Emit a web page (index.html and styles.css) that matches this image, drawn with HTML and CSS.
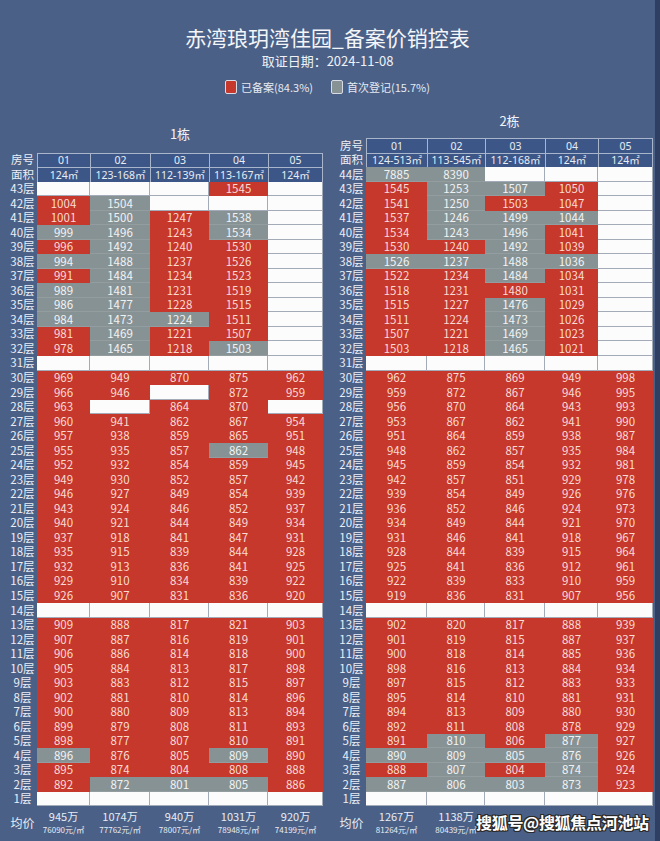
FILE: index.html
```html
<!DOCTYPE html>
<html lang="zh-CN">
<head>
<meta charset="utf-8">
<title>赤湾琅玥湾佳园_备案价销控表</title>
<link rel="stylesheet" href="styles.css">
</head>
<body>
<div class="page">
  <header class="head">
    <h1 class="title">赤湾琅玥湾佳园_备案价销控表</h1>
    <p class="date">取证日期：2024-11-08</p>
    <div class="legend">
      <span class="key"><i class="sw sw-r"></i>已备案(84.3%)</span>
      <span class="key"><i class="sw sw-g"></i>首次登记(15.7%)</span>
    </div>
  </header>

  <main class="blds">
    <section class="bld b1">
      <h2 class="bname">1栋</h2>
      <div class="grid c1">
        <span class="l">房号</span><span class="h">01</span><span class="h">02</span><span class="h">03</span><span class="h">04</span><span class="h hl">05</span>
        <span class="l">面积</span><span class="h">124㎡</span><span class="h">123-168㎡</span><span class="h">112-139㎡</span><span class="h">113-167㎡</span><span class="h hl">124㎡</span>
        <span class="l">43层</span><span class="w"></span><span class="w"></span><span class="w"></span><span class="r">1545</span><span class="w"></span>
        <span class="l">42层</span><span class="r">1004</span><span class="g">1504</span><span class="w"></span><span class="w"></span><span class="w"></span>
        <span class="l">41层</span><span class="r">1001</span><span class="g">1500</span><span class="r">1247</span><span class="g">1538</span><span class="w"></span>
        <span class="l">40层</span><span class="g">999</span><span class="g">1496</span><span class="r">1243</span><span class="g">1534</span><span class="w"></span>
        <span class="l">39层</span><span class="r">996</span><span class="g">1492</span><span class="r">1240</span><span class="r">1530</span><span class="w"></span>
        <span class="l">38层</span><span class="g">994</span><span class="g">1488</span><span class="r">1237</span><span class="r">1526</span><span class="w"></span>
        <span class="l">37层</span><span class="r">991</span><span class="g">1484</span><span class="r">1234</span><span class="r">1523</span><span class="w"></span>
        <span class="l">36层</span><span class="g">989</span><span class="g">1481</span><span class="r">1231</span><span class="r">1519</span><span class="w"></span>
        <span class="l">35层</span><span class="g">986</span><span class="g">1477</span><span class="r">1228</span><span class="r">1515</span><span class="w"></span>
        <span class="l">34层</span><span class="g">984</span><span class="g">1473</span><span class="g">1224</span><span class="r">1511</span><span class="w"></span>
        <span class="l">33层</span><span class="r">981</span><span class="g">1469</span><span class="r">1221</span><span class="r">1507</span><span class="w"></span>
        <span class="l">32层</span><span class="r">978</span><span class="g">1465</span><span class="r">1218</span><span class="g">1503</span><span class="w"></span>
        <span class="l">31层</span><span class="w"></span><span class="w"></span><span class="w"></span><span class="w"></span><span class="w"></span>
        <span class="l">30层</span><span class="r">969</span><span class="r">949</span><span class="r">870</span><span class="r">875</span><span class="r">962</span>
        <span class="l">29层</span><span class="r">966</span><span class="r">946</span><span class="w"></span><span class="r">872</span><span class="r">959</span>
        <span class="l">28层</span><span class="r">963</span><span class="w"></span><span class="r">864</span><span class="r">870</span><span class="w"></span>
        <span class="l">27层</span><span class="r">960</span><span class="r">941</span><span class="r">862</span><span class="r">867</span><span class="r">954</span>
        <span class="l">26层</span><span class="r">957</span><span class="r">938</span><span class="r">859</span><span class="r">865</span><span class="r">951</span>
        <span class="l">25层</span><span class="r">955</span><span class="r">935</span><span class="r">857</span><span class="g">862</span><span class="r">948</span>
        <span class="l">24层</span><span class="r">952</span><span class="r">932</span><span class="r">854</span><span class="r">859</span><span class="r">945</span>
        <span class="l">23层</span><span class="r">949</span><span class="r">930</span><span class="r">852</span><span class="r">857</span><span class="r">942</span>
        <span class="l">22层</span><span class="r">946</span><span class="r">927</span><span class="r">849</span><span class="r">854</span><span class="r">939</span>
        <span class="l">21层</span><span class="r">943</span><span class="r">924</span><span class="r">846</span><span class="r">852</span><span class="r">937</span>
        <span class="l">20层</span><span class="r">940</span><span class="r">921</span><span class="r">844</span><span class="r">849</span><span class="r">934</span>
        <span class="l">19层</span><span class="r">937</span><span class="r">918</span><span class="r">841</span><span class="r">847</span><span class="r">931</span>
        <span class="l">18层</span><span class="r">935</span><span class="r">915</span><span class="r">839</span><span class="r">844</span><span class="r">928</span>
        <span class="l">17层</span><span class="r">932</span><span class="r">913</span><span class="r">836</span><span class="r">841</span><span class="r">925</span>
        <span class="l">16层</span><span class="r">929</span><span class="r">910</span><span class="r">834</span><span class="r">839</span><span class="r">922</span>
        <span class="l">15层</span><span class="r">926</span><span class="r">907</span><span class="r">831</span><span class="r">836</span><span class="r">920</span>
        <span class="l">14层</span><span class="w"></span><span class="w"></span><span class="w"></span><span class="w"></span><span class="w"></span>
        <span class="l">13层</span><span class="r">909</span><span class="r">888</span><span class="r">817</span><span class="r">821</span><span class="r">903</span>
        <span class="l">12层</span><span class="r">907</span><span class="r">887</span><span class="r">816</span><span class="r">819</span><span class="r">901</span>
        <span class="l">11层</span><span class="r">906</span><span class="r">886</span><span class="r">814</span><span class="r">818</span><span class="r">900</span>
        <span class="l">10层</span><span class="r">905</span><span class="r">884</span><span class="r">813</span><span class="r">817</span><span class="r">898</span>
        <span class="l">9层</span><span class="r">903</span><span class="r">883</span><span class="r">812</span><span class="r">815</span><span class="r">897</span>
        <span class="l">8层</span><span class="r">902</span><span class="r">881</span><span class="r">810</span><span class="r">814</span><span class="r">896</span>
        <span class="l">7层</span><span class="r">900</span><span class="r">880</span><span class="r">809</span><span class="r">813</span><span class="r">894</span>
        <span class="l">6层</span><span class="r">899</span><span class="r">879</span><span class="r">808</span><span class="r">811</span><span class="r">893</span>
        <span class="l">5层</span><span class="r">898</span><span class="r">877</span><span class="r">807</span><span class="r">810</span><span class="r">891</span>
        <span class="l">4层</span><span class="g">896</span><span class="r">876</span><span class="r">805</span><span class="g">809</span><span class="r">890</span>
        <span class="l">3层</span><span class="r">895</span><span class="r">874</span><span class="r">804</span><span class="r">808</span><span class="r">888</span>
        <span class="l">2层</span><span class="r">892</span><span class="g">872</span><span class="g">801</span><span class="g">805</span><span class="r">886</span>
        <span class="l">1层</span><span class="w"></span><span class="w"></span><span class="w"></span><span class="w"></span><span class="w"></span>
      </div>
      <div class="avg c1">
        <span class="l al">均价</span>
        <span class="a"><b>945万</b><small>76090元/㎡</small></span>
        <span class="a"><b>1074万</b><small>77762元/㎡</small></span>
        <span class="a"><b>940万</b><small>78007元/㎡</small></span>
        <span class="a"><b>1031万</b><small>78948元/㎡</small></span>
        <span class="a"><b>920万</b><small>74199元/㎡</small></span>
      </div>
    </section>

    <section class="bld b2">
      <h2 class="bname">2栋</h2>
      <div class="grid c2">
        <span class="l">房号</span><span class="h">01</span><span class="h">02</span><span class="h">03</span><span class="h">04</span><span class="h hl">05</span>
        <span class="l">面积</span><span class="h">124-513㎡</span><span class="h">113-545㎡</span><span class="h">112-168㎡</span><span class="h">124㎡</span><span class="h hl">124㎡</span>
        <span class="l">44层</span><span class="g">7885</span><span class="g">8390</span><span class="w"></span><span class="w"></span><span class="w"></span>
        <span class="l">43层</span><span class="r">1545</span><span class="g">1253</span><span class="g">1507</span><span class="r">1050</span><span class="w"></span>
        <span class="l">42层</span><span class="r">1541</span><span class="g">1250</span><span class="r">1503</span><span class="r">1047</span><span class="w"></span>
        <span class="l">41层</span><span class="r">1537</span><span class="g">1246</span><span class="g">1499</span><span class="g">1044</span><span class="w"></span>
        <span class="l">40层</span><span class="r">1534</span><span class="g">1243</span><span class="g">1496</span><span class="r">1041</span><span class="w"></span>
        <span class="l">39层</span><span class="r">1530</span><span class="r">1240</span><span class="g">1492</span><span class="r">1039</span><span class="w"></span>
        <span class="l">38层</span><span class="g">1526</span><span class="g">1237</span><span class="g">1488</span><span class="g">1036</span><span class="w"></span>
        <span class="l">37层</span><span class="r">1522</span><span class="r">1234</span><span class="g">1484</span><span class="r">1034</span><span class="w"></span>
        <span class="l">36层</span><span class="r">1518</span><span class="r">1231</span><span class="r">1480</span><span class="r">1031</span><span class="w"></span>
        <span class="l">35层</span><span class="r">1515</span><span class="r">1227</span><span class="g">1476</span><span class="r">1029</span><span class="w"></span>
        <span class="l">34层</span><span class="r">1511</span><span class="r">1224</span><span class="g">1473</span><span class="r">1026</span><span class="w"></span>
        <span class="l">33层</span><span class="r">1507</span><span class="r">1221</span><span class="g">1469</span><span class="r">1023</span><span class="w"></span>
        <span class="l">32层</span><span class="r">1503</span><span class="r">1218</span><span class="g">1465</span><span class="r">1021</span><span class="w"></span>
        <span class="l">31层</span><span class="w"></span><span class="w"></span><span class="w"></span><span class="w"></span><span class="w"></span>
        <span class="l">30层</span><span class="r">962</span><span class="r">875</span><span class="r">869</span><span class="r">949</span><span class="r">998</span>
        <span class="l">29层</span><span class="r">959</span><span class="r">872</span><span class="r">867</span><span class="r">946</span><span class="r">995</span>
        <span class="l">28层</span><span class="r">956</span><span class="r">870</span><span class="r">864</span><span class="r">943</span><span class="r">993</span>
        <span class="l">27层</span><span class="r">953</span><span class="r">867</span><span class="r">862</span><span class="r">941</span><span class="r">990</span>
        <span class="l">26层</span><span class="r">951</span><span class="r">864</span><span class="r">859</span><span class="r">938</span><span class="r">987</span>
        <span class="l">25层</span><span class="r">948</span><span class="r">862</span><span class="r">857</span><span class="r">935</span><span class="r">984</span>
        <span class="l">24层</span><span class="r">945</span><span class="r">859</span><span class="r">854</span><span class="r">932</span><span class="r">981</span>
        <span class="l">23层</span><span class="r">942</span><span class="r">857</span><span class="r">851</span><span class="r">929</span><span class="r">978</span>
        <span class="l">22层</span><span class="r">939</span><span class="r">854</span><span class="r">849</span><span class="r">926</span><span class="r">976</span>
        <span class="l">21层</span><span class="r">936</span><span class="r">852</span><span class="r">846</span><span class="r">924</span><span class="r">973</span>
        <span class="l">20层</span><span class="r">934</span><span class="r">849</span><span class="r">844</span><span class="r">921</span><span class="r">970</span>
        <span class="l">19层</span><span class="r">931</span><span class="r">846</span><span class="r">841</span><span class="r">918</span><span class="r">967</span>
        <span class="l">18层</span><span class="r">928</span><span class="r">844</span><span class="r">839</span><span class="r">915</span><span class="r">964</span>
        <span class="l">17层</span><span class="r">925</span><span class="r">841</span><span class="r">836</span><span class="r">912</span><span class="r">961</span>
        <span class="l">16层</span><span class="r">922</span><span class="r">839</span><span class="r">833</span><span class="r">910</span><span class="r">959</span>
        <span class="l">15层</span><span class="r">919</span><span class="r">836</span><span class="r">831</span><span class="r">907</span><span class="r">956</span>
        <span class="l">14层</span><span class="w"></span><span class="w"></span><span class="w"></span><span class="w"></span><span class="w"></span>
        <span class="l">13层</span><span class="r">902</span><span class="r">820</span><span class="r">817</span><span class="r">888</span><span class="r">939</span>
        <span class="l">12层</span><span class="r">901</span><span class="r">819</span><span class="r">815</span><span class="r">887</span><span class="r">937</span>
        <span class="l">11层</span><span class="r">900</span><span class="r">818</span><span class="r">814</span><span class="r">885</span><span class="r">936</span>
        <span class="l">10层</span><span class="r">898</span><span class="r">816</span><span class="r">813</span><span class="r">884</span><span class="r">934</span>
        <span class="l">9层</span><span class="r">897</span><span class="r">815</span><span class="r">812</span><span class="r">883</span><span class="r">933</span>
        <span class="l">8层</span><span class="r">895</span><span class="r">814</span><span class="r">810</span><span class="r">881</span><span class="r">931</span>
        <span class="l">7层</span><span class="r">894</span><span class="r">813</span><span class="r">809</span><span class="r">880</span><span class="r">930</span>
        <span class="l">6层</span><span class="r">892</span><span class="r">811</span><span class="r">808</span><span class="r">878</span><span class="r">929</span>
        <span class="l">5层</span><span class="r">891</span><span class="g">810</span><span class="r">806</span><span class="g">877</span><span class="r">927</span>
        <span class="l">4层</span><span class="g">890</span><span class="g">809</span><span class="g">805</span><span class="g">876</span><span class="r">926</span>
        <span class="l">3层</span><span class="r">888</span><span class="g">807</span><span class="r">804</span><span class="g">874</span><span class="r">924</span>
        <span class="l">2层</span><span class="g">887</span><span class="g">806</span><span class="g">803</span><span class="g">873</span><span class="r">923</span>
        <span class="l">1层</span><span class="w"></span><span class="w"></span><span class="w"></span><span class="w"></span><span class="w"></span>
      </div>
      <div class="avg c2">
        <span class="l al">均价</span>
        <span class="a"><b>1267万</b><small>81264元/㎡</small></span>
        <span class="a"><b>1138万</b><small>80439元/㎡</small></span>
        <span class="a"></span>
        <span class="a"></span>
        <span class="a"></span>
      </div>
    </section>
  </main>

  <div class="wm">搜狐号@搜狐焦点河池站</div>
</div>
</body>
</html>
```

FILE: styles.css
```css
html, body {
  margin: 0;
  padding: 0;
}

body {
  background: #4b6086;
  font-family: "Noto Sans CJK SC", "Noto Sans", sans-serif;
}

.page {
  position: relative;
  width: 655px;
  height: 841px;
  border-right: 5px solid #2e3f63;
  overflow: hidden;
  color: #eef1f6;
}

/* ---------- header ---------- */
.head {
  text-align: center;
  padding-top: 23px;
}

.title {
  margin: 0;
  font-size: 21px;
  line-height: 28px;
  font-weight: 400;
  color: #f3f5f9;
}

.date {
  margin: 1px 0 0;
  font-size: 13px;
  line-height: 18px;
  color: #eef1f6;
}

.legend {
  margin-top: 9px;
  display: flex;
  justify-content: center;
  gap: 18px;
  font-size: 11px;
  line-height: 16px;
  color: #e6eaf2;
}

.key {
  display: flex;
  align-items: center;
  gap: 4px;
}

.sw {
  display: block;
  width: 12px;
  height: 14px;
  box-sizing: border-box;
  border: 1px solid #d6dbe5;
  border-radius: 2px;
}

.sw-r { background: #c6372c; }
.sw-g { background: #879295; }

/* ---------- buildings ---------- */
.blds {
  display: flex;
  align-items: flex-end;
  gap: 14px;
  margin-top: 17px;
  padding-left: 8px;
}

.bname {
  margin: 0 0 8px;
  padding-left: 29px;
  text-align: center;
  font-size: 13px;
  line-height: 18px;
  font-weight: 400;
  color: #f0f3f8;
}

.b1 .bname {
  margin-bottom: 10px;
}

.grid,
.avg {
  display: grid;
}

.c1 { grid-template-columns: 29px 53px 60px 59px 59px 55px; }
.c2 { grid-template-columns: 29px 61px 58px 60px 53px 55px; }

.grid {
  grid-auto-rows: 14.54px;
  font-size: 11.5px;
}

.grid > span {
  display: flex;
  align-items: center;
  justify-content: center;
  line-height: 1;
  white-space: nowrap;
}

.l {
  font-size: 11.5px;
  color: #eaeef6;
}

.h {
  background: #3c5787;
  color: #e8edf5;
  border-top: 1px solid #a9b5ca;
  border-left: 1px solid #a9b5ca;
  box-sizing: border-box;
  font-family: "Noto Sans", "Noto Sans CJK SC", sans-serif;
  font-size: 10.5px;
}

.hl {
  border-right: 1px solid #a9b5ca;
}

.r {
  background: #c6372c;
  color: #f9dbd2;
}

.g {
  background: #879295;
  color: #f1f3f3;
  box-shadow: inset 0 -1px 0 #939da0;
}

.w {
  background: #fcfcfc;
  box-shadow: inset -1px -1px 0 #a3aab8;
}

/* ---------- average row ---------- */
.avg {
  height: 34px;
}

.a {
  display: flex;
  flex-direction: column;
  align-items: center;
  padding-top: 2px;
  color: #e8ecf4;
  white-space: nowrap;
}

.a b {
  display: block;
  font-weight: 400;
  font-size: 11px;
  line-height: 16px;
}

.a small {
  display: block;
  font-size: 8px;
  line-height: 12px;
}

.al {
  display: flex;
  align-items: center;
  justify-content: center;
  font-size: 12px;
  padding-bottom: 1px;
}

/* ---------- watermark ---------- */
.wm {
  position: absolute;
  left: 476px;
  top: 812px;
  font-size: 16px;
  line-height: 20px;
  font-weight: 700;
  color: #ffffff;
  letter-spacing: -0.3px;
  text-shadow:
    1px 1px 0 #2a2a2a, -1px -1px 0 #2a2a2a,
    1px -1px 0 #2a2a2a, -1px 1px 0 #2a2a2a,
    0 1px 0 #2a2a2a, 0 -1px 0 #2a2a2a,
    1px 0 0 #2a2a2a, -1px 0 0 #2a2a2a;
}
```
